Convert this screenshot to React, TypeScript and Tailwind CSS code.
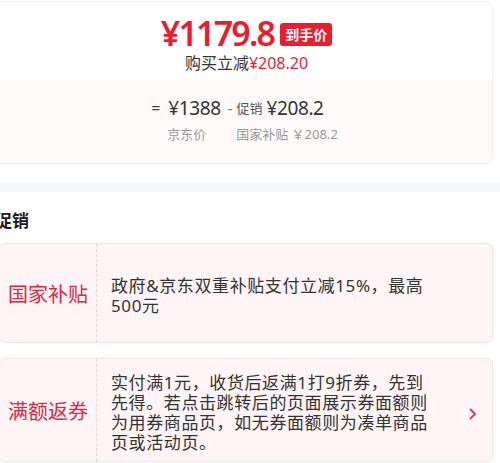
const promos = [
  {
    label: '国家补贴',
    text: '政府&京东双重补贴支付立减15%，最高500元',
    arrow: false,
  },
  {
    label: '满额返券',
    text: '实付满1元，收货后返满1打9折券，先到先得。若点击跳转后的页面展示券面额则为用券商品页，如无券面额则为凑单商品页或活动页。',
    arrow: true,
  },
]

function PromoCard({ label, text, arrow }: { label: string; text: string; arrow: boolean }) {
  return (
    <div className="-ml-px flex min-h-[100px] w-[494px] items-stretch rounded-md border border-[#f7e1e4] bg-[#fff5f6]">
      <div className="flex w-[97px] shrink-0 items-center justify-center border-r border-dashed border-[#ecd3d7] pt-[4px] text-[20px] leading-[24px] text-[#e1263c]">
        {label}
      </div>
      <div className="flex flex-1 items-center pb-[8px] pl-[14px] pr-[8px] pt-[14px]">
        <p className="w-[322px] text-[17px] leading-[20px] tracking-[0.6px] text-[#333]">{text}</p>
        {arrow && (
          <svg className="ml-auto mr-[7px] mt-[2px] h-[12px] w-[8px]" viewBox="0 0 8 12" fill="none">
            <path d="M1.5 1.5 6 6l-4.5 4.5" stroke="#e23a57" strokeWidth="1.8" strokeLinecap="round" strokeLinejoin="round" />
          </svg>
        )}
      </div>
    </div>
  )
}

export default function App() {
  return (
    <div className="h-[463px] w-[500px] overflow-hidden bg-white font-['Noto_Sans','Noto_Sans_CJK_SC',sans-serif]">
      {/* price card */}
      <div className="-ml-2 mt-px w-[501px] overflow-hidden rounded-lg border border-[#fbe8ea]">
        <div className="flex flex-col items-center bg-white pb-[6px] pl-2 pt-[12px]">
          <div className="flex items-center">
            <span className="text-[34px] font-semibold leading-[38px] tracking-[-1.8px] text-[#ec1c2c]">¥1179.8</span>
            <span className="ml-[6px] mt-[2px] rounded-[3px] bg-[#ec1c2c] px-[5px] text-[14px] font-bold leading-[23px] text-white">到手价</span>
          </div>
          <div className="text-[16px] leading-[22px] text-[#333]">
            购买立减<span className="text-[#e4233a]">¥208.20</span>
          </div>
        </div>
        <div className="relative flex justify-center bg-[#fffafa] pb-[20px] pl-2 pt-[16px]">
          <span className="absolute -top-[4px] left-[257px] h-0 w-0 border-x-[5px] border-b-[4px] border-x-transparent border-b-[#fdf1f2]" />
          <div className="-ml-[4px] flex flex-col">
            <div className="flex items-center text-[#333]">
              <span className="text-[16px] leading-[24px] text-[#444]">=</span>
              <span className="ml-[8px] text-[19px] leading-[24px] tracking-[-0.4px]">¥1388</span>
              <span className="ml-[7px] text-[15px] leading-[24px] text-[#777]">-</span>
              <span className="ml-[4px] text-[13px] leading-[24px] text-[#555]">促销</span>
              <span className="ml-[4px] text-[19px] leading-[24px] tracking-[-0.4px]">¥208.2</span>
            </div>
            <div className="ml-[16px] mt-[5px] flex text-[13px] leading-[18px] text-[#999]">
              <span>京东价</span>
              <span className="ml-[30px]">国家补贴 ￥208.2</span>
            </div>
          </div>
        </div>
      </div>

      <div className="mt-[19px] h-[9px] w-full bg-[#f5f7fa]" />

      <h2 className="-ml-[5px] mt-[17px] text-[17px] font-bold leading-[24px] text-[#1a1a1a]">促销</h2>

      <div className="mt-[10px] flex flex-col gap-[15px]">
        {promos.map((p) => (
          <PromoCard key={p.label} {...p} />
        ))}
      </div>
    </div>
  )
}
